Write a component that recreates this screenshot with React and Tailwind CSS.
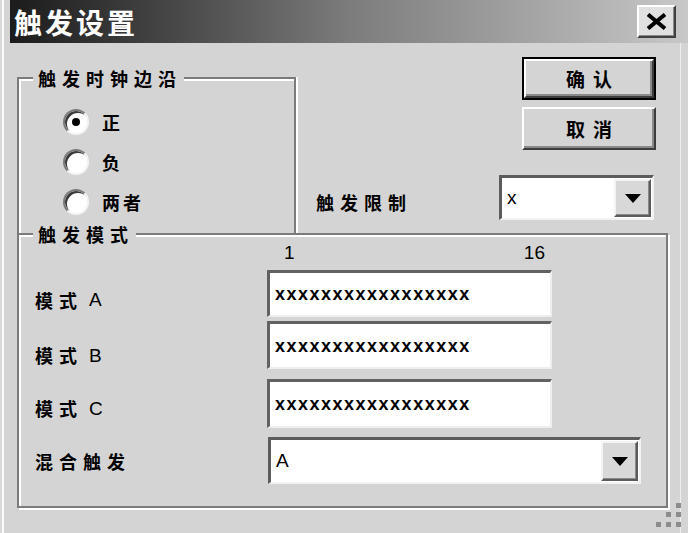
const cjk = "font-['Noto_Sans_CJK_SC','Noto_Sans',sans-serif]"
const latin = "font-['Liberation_Sans',Arial,sans-serif]"

function Radio({ checked, label }) {
  return (
    <div className="flex items-center h-[26px]">
      <div className="w-[26px] h-[26px] rounded-full bg-white border-2 border-t-[#7a7a7a] border-l-[#7a7a7a] border-b-[#f4f4f4] border-r-[#f4f4f4] shadow-[inset_2px_2px_0_#3a3a3a] flex items-center justify-center">
        {checked && <div className="w-[8px] h-[8px] rounded-full bg-black" />}
      </div>
      <span className={`ml-[13px] text-[18px] font-semibold leading-none tracking-[3px] ${cjk}`}>{label}</span>
    </div>
  )
}

function Button({ children, primary }) {
  return (
    <button
      className={`w-[134px] h-[43px] bg-[#d4d4d4] flex items-center justify-center ${
        primary ? 'border-2 border-black' : ''
      }`}
    >
      <div className="w-full h-full flex items-center justify-center border-2 border-t-white border-l-white border-b-[#3c3c3c] border-r-[#3c3c3c] shadow-[inset_-2px_-2px_0_#8a8a8a]">
        <span className={`text-[19px] font-semibold leading-none tracking-[8px] pl-[8px] ${cjk}`}>{children}</span>
      </div>
    </button>
  )
}

function Arrow() {
  return (
    <div className="w-[37px] h-full bg-[#d8d8d8] border-2 border-t-[#f4f4f4] border-l-[#f4f4f4] border-b-[#5a5a5a] border-r-[#5a5a5a] shadow-[inset_-1px_-1px_0_#8a8a8a] flex items-center justify-center">
      <svg width="16" height="9" viewBox="0 0 16 9">
        <path d="M0 0h16L8 9z" fill="#000" />
      </svg>
    </div>
  )
}

function Combo({ value, className }) {
  return (
    <div className={`flex bg-white border-t-[3px] border-l-[3px] border-b-2 border-r-2 border-t-[#5c5c5c] border-l-[#5c5c5c] border-b-[#f2f2f2] border-r-[#f2f2f2] ${className}`}>
      <div className={`flex-1 flex items-center pl-[5px] text-[19px] ${latin}`}>{value}</div>
      <div className="py-[1px] pr-[1px]">
        <Arrow />
      </div>
    </div>
  )
}

function TextBox({ h }) {
  return (
    <div className={`w-[285px] ${h} bg-white flex items-center pl-[5px] border-t-[3px] border-l-[3px] border-b-2 border-r-2 border-t-[#626262] border-l-[#626262] border-b-[#eeeeee] border-r-[#eeeeee]`}>
      <span className={`text-[18px] font-bold leading-none tracking-[1.5px] ${latin}`}>xxxxxxxxxxxxxxxxx</span>
    </div>
  )
}

function Row({ label, letter, shift, h, children }) {
  return (
    <div className={`flex items-center ${h}`}>
      <span className={`w-[248px] pl-[16px] flex items-center ${shift}`}>
        <span className={`text-[18px] font-semibold leading-none tracking-[6px] ${cjk}`}>{label}</span>
        {letter && <span className={`ml-[6px] text-[19px] leading-none ${latin}`}>{letter}</span>}
      </span>
      {children}
    </div>
  )
}

export default function App() {
  return (
    <div className="relative w-[688px] h-[533px] bg-[#d4d4d4] overflow-hidden flex flex-col text-black shadow-[inset_2px_0_0_#dadada,inset_4px_0_0_#fbfbfb,inset_-7px_0_0_#d4d4d4,inset_-8px_0_0_#efefef]">
      <div className="ml-[10px] h-[43px] shrink-0 flex items-center pl-[4px] pr-[12px] bg-gradient-to-r from-[#1c1c1c] via-[#7c7c7c] to-[#c8c8c8]">
        <span className={`text-white text-[28px] font-bold leading-none tracking-[3px] ${cjk}`}>触发设置</span>
        <button className="ml-auto w-[39px] h-[33px] bg-[#e0e0e0] border-2 border-t-white border-l-white border-b-[#404040] border-r-[#404040] shadow-[inset_-1px_-1px_0_#8a8a8a] flex items-center justify-center">
          <svg width="21" height="17" viewBox="0 0 21 17">
            <path d="M2 1.5l17 14M19 1.5l-17 14" stroke="#000" strokeWidth="4" />
          </svg>
        </button>
      </div>

      <div className="flex items-start">
        <div className="relative ml-[17px] mt-[34px] w-[279px] h-[156px] border-2 border-b-0 border-[#7b7b7b] shadow-[inset_2px_2px_0_#fff,2px_0_0_#fff]">
          <span className={`absolute left-[14px] top-[-13px] pl-[5px] pr-[2px] bg-[#d4d4d4] text-[18px] font-semibold leading-[24px] tracking-[6px] ${cjk}`}>
            触发时钟边沿
          </span>
          <div className="mt-[30px] ml-[44px] flex flex-col gap-[14px]">
            <Radio checked label="正" />
            <Radio label="负" />
            <Radio label="两者" />
          </div>
        </div>

        <div className="flex flex-col mt-[14px]">
          <div className="ml-[226px]">
            <Button primary>确认</Button>
          </div>
          <div className="ml-[226px] mt-[7px]">
            <Button>取消</Button>
          </div>
          <div className="flex items-center mt-[25px]">
            <span className={`ml-[20px] w-[183px] mt-[9px] text-[18px] font-semibold leading-none tracking-[6px] ${cjk}`}>触发限制</span>
            <Combo value="x" className="w-[155px] h-[45px]" />
          </div>
        </div>
      </div>

      <div className="relative ml-[17px] w-[651px] h-[275px] border-2 border-[#7b7b7b] shadow-[inset_2px_2px_0_#fff,2px_2px_0_#fff]">
        <span className={`absolute left-[14px] top-[-13px] pl-[5px] pr-[2px] bg-[#d4d4d4] text-[18px] font-semibold leading-[24px] tracking-[6px] ${cjk}`}>
          触发模式
        </span>
        <div className="h-[35px] flex items-center">
          <div className="w-[248px]" />
          <div className={`w-[285px] flex justify-between pl-[17px] pr-[7px] text-[19px] leading-none ${latin}`}>
            <span>1</span>
            <span>16</span>
          </div>
        </div>
        <Row label="模式" letter="A" shift="mt-[12px]" h="h-[47px]">
          <TextBox h="h-[47px]" />
        </Row>
        <div className="mt-[4px]">
          <Row label="模式" letter="B" shift="mt-[20px]" h="h-[48px]">
            <TextBox h="h-[48px]" />
          </Row>
        </div>
        <div className="mt-[10px]">
          <Row label="模式" letter="C" shift="mt-[9px]" h="h-[49px]">
            <TextBox h="h-[49px]" />
          </Row>
        </div>
        <div className="mt-[9px]">
          <Row label="混合触发" shift="" h="h-[47px]">
            <Combo value="A" className="ml-[1px] w-[373px] h-[47px]" />
          </Row>
        </div>
      </div>

      <svg className="absolute right-[6px] bottom-[4px]" width="26" height="26" viewBox="0 0 26 26">
        <g fill="#8c8c8c">
          <rect x="20" y="0" width="5" height="5" />
          <rect x="10" y="9" width="5" height="5" />
          <rect x="20" y="9" width="5" height="5" />
          <rect x="0" y="19" width="5" height="5" />
          <rect x="10" y="19" width="5" height="5" />
          <rect x="20" y="19" width="5" height="5" />
        </g>
      </svg>
    </div>
  )
}
